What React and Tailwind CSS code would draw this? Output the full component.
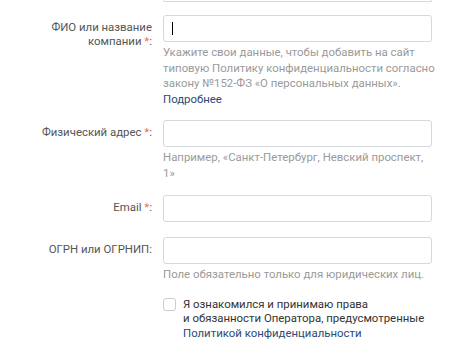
import React from 'react';

const Req = () => <span className="text-[#e8704f]">*</span>;

function Row({ label, hint, caret = false, className = '' }) {
    return (
        <div className={`flex ${className}`}>
            <div className="w-[152px] shrink-0 pt-[5px] text-right text-[11.4px] leading-[14px] text-[#555]">
                {label}
            </div>
            <div className="ml-[11px] w-[269px]">
                <div className="relative">
                    <input className="block h-[27px] w-full rounded-[3px] border border-[#d5d8dc] bg-white px-2 text-[13px] outline-none" />
                    {caret && <span className="absolute left-[9px] top-[7px] h-[13px] w-px bg-black" />}
                </div>
                {hint && (
                    <div className="mt-[3px] whitespace-nowrap text-[11.4px] leading-[15.5px] text-[#9a9a9a]">{hint}</div>
                )}
            </div>
        </div>
    );
}

export default function App() {
    return (
        <div className="h-[351px] w-[457px] overflow-hidden bg-white font-['Roboto',sans-serif]">
            <div className="ml-[163px] h-[2px] w-[269px] rounded-b-[3px] border-x border-b border-[#d5d8dc]" />

            <Row
                className="mt-[13px]"
                caret
                label={<>ФИО или название<br />компании <Req />:</>}
                hint={
                    <>
                        Укажите свои данные, чтобы добавить на сайт
                        <br />
                        типовую Политику конфиденциальности согласно
                        <br />
                        закону №152-ФЗ «О персональных данных».
                        <br />
                        <a className="text-[#2c4a74]">Подробнее</a>
                    </>
                }
            />

            <Row
                className="mt-[13px]"
                label={<>Физический адрес <Req />:</>}
                hint={<>Например, «Санкт-Петербург, Невский проспект,<br />1»</>}
            />

            <Row className="mt-[14px]" label={<>Email <Req />:</>} />

            <Row
                className="mt-[15px]"
                label="ОГРН или ОГРНИП:"
                hint="Поле обязательно только для юридических лиц."
            />

            <div className="ml-[163px] mt-[14px] flex">
                <span className="mt-[1px] h-[13px] w-[13px] shrink-0 rounded-[3px] border border-[#c9cdd2] bg-white" />
                <div className="ml-[7px] text-[11.4px] leading-[14.5px] text-[#333]">
                    Я ознакомился и принимаю права
                    <br />
                    и обязанности Оператора, предусмотренные
                    <br />
                    <a className="text-[#2c4a74]">Политикой конфиденциальности</a>
                </div>
            </div>
        </div>
    );
}
